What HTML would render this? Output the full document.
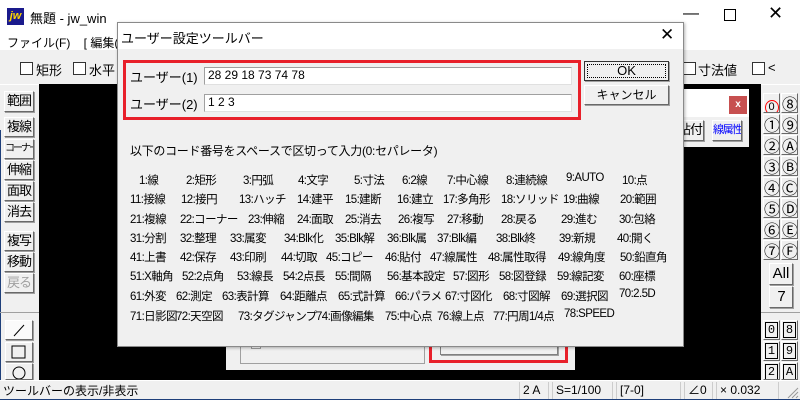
<!DOCTYPE html>
<html><head><meta charset="utf-8"><style>
*{margin:0;padding:0;box-sizing:border-box}
body{width:800px;height:400px;overflow:hidden;position:relative;background:#f0f0f0;font-family:"Liberation Sans","Noto Sans CJK JP",sans-serif;font-size:12px;color:#000}
.a{position:absolute;white-space:nowrap}
.btn{position:absolute;background:#f0f0f0;border:1px solid;border-color:#fff #696969 #696969 #fff;box-shadow:1px 1px 0 #a0a0a0;text-align:center;font-size:13px;line-height:18px;white-space:nowrap;overflow:hidden;letter-spacing:-1px}
.cb{position:absolute;width:13px;height:13px;border:1px solid #333;background:#fff}
.rb{position:absolute;width:17px;height:20px;background:#f0f0f0;border:1px solid;border-color:#fff #696969 #696969 #fff;text-align:center;font-size:16px;line-height:18px;font-family:"Noto Sans CJK JP",sans-serif;overflow:hidden}
.inp{position:absolute;background:#fff;border:1px solid;border-color:#a0a0a0 #e0e0e0 #e0e0e0 #a0a0a0;font-size:12px;line-height:15px;padding-left:3px}
.g span{position:absolute;white-space:nowrap;font-size:11.5px;letter-spacing:-0.6px}
</style></head><body>
<div class="a" style="left:0;top:0;width:800px;height:50px;background:#fff"></div>
<div class="a" style="left:7px;top:8px;width:17px;height:17px;background:#1a1a8c;color:#ffd800;font-size:11px;font-weight:bold;font-style:italic;line-height:17px;text-align:center">jw</div>
<div class="a" style="left:30px;top:8px;font-size:13px">無題 - jw_win</div>
<div class="a" style="left:683px;top:5px;font-size:16px">—</div>
<div class="a" style="left:724px;top:9px;width:12px;height:12px;border:1px solid #000"></div>
<div class="a" style="left:768px;top:3px;font-size:18px">✕</div>
<div class="a" style="left:7px;top:34px;font-size:12px">ファイル(F)&nbsp;&nbsp;&nbsp;&nbsp;[ 編集(E)</div>
<div class="cb" style="left:20px;top:62px"></div><div class="a" style="left:36px;top:60px;font-size:13px">矩形</div>
<div class="cb" style="left:73px;top:62px"></div><div class="a" style="left:89px;top:60px;font-size:13px">水平・</div>
<div class="cb" style="left:683px;top:62px"></div><div class="a" style="left:698px;top:60px;font-size:13px">寸法値</div>
<div class="cb" style="left:752px;top:62px"></div><div class="a" style="left:768px;top:60px;font-size:13px">&lt;</div>
<div class="a" style="left:0;top:84px;width:800px;height:1px;background:#fff"></div>
<div class="a" style="left:39px;top:84px;width:722px;height:296px;background:#000"></div>
<div class="a" style="left:0;top:130px;width:1px;height:250px;background:#1e3f7a"></div>
<div class="btn" style="left:4px;top:91px;width:30px;height:21px">範囲</div>
<div class="btn" style="left:4px;top:117px;width:30px;height:20px">複線</div>
<div class="btn" style="left:4px;top:139px;width:30px;height:20px;font-size:10px;letter-spacing:-2px">コーナー</div>
<div class="btn" style="left:4px;top:160px;width:30px;height:20px">伸縮</div>
<div class="btn" style="left:4px;top:181px;width:30px;height:20px">面取</div>
<div class="btn" style="left:4px;top:202px;width:30px;height:20px">消去</div>
<div class="btn" style="left:4px;top:231px;width:30px;height:20px">複写</div>
<div class="btn" style="left:4px;top:252px;width:30px;height:20px">移動</div>
<div class="btn" style="left:4px;top:273px;width:30px;height:20px;color:#a0a0a0">戻る</div>
<div class="a" style="left:0;top:312px;width:39px;height:1px;background:#a0a0a0"></div>
<div class="btn" style="left:5px;top:320px;width:28px;height:20px;background:#fafafa"><svg width="26" height="18"><line x1="8" y1="15" x2="18" y2="4" stroke="#000"/></svg></div>
<div class="btn" style="left:5px;top:342px;width:28px;height:20px"><svg width="26" height="18"><rect x="6" y="3" width="13" height="12" fill="none" stroke="#000"/></svg></div>
<div class="btn" style="left:5px;top:363px;width:28px;height:17px"><svg width="26" height="16"><circle cx="13" cy="9" r="6" fill="none" stroke="#000"/></svg></div>
<div class="rb" style="left:763px;top:93px"><span style="display:inline-block;width:14px;height:15px;border:1px solid red;border-radius:50%;font-size:11px;line-height:13px;margin-top:2px;font-family:'Liberation Sans'">0</span></div>
<div class="rb" style="left:781px;top:93px">⑧</div>
<div class="rb" style="left:763px;top:114px">①</div><div class="rb" style="left:781px;top:114px">⑨</div>
<div class="rb" style="left:763px;top:135px">②</div><div class="rb" style="left:781px;top:135px">Ⓐ</div>
<div class="rb" style="left:763px;top:156px">③</div><div class="rb" style="left:781px;top:156px">Ⓑ</div>
<div class="rb" style="left:763px;top:177px">④</div><div class="rb" style="left:781px;top:177px">Ⓒ</div>
<div class="rb" style="left:763px;top:198px">⑤</div><div class="rb" style="left:781px;top:198px">Ⓓ</div>
<div class="rb" style="left:763px;top:219px">⑥</div><div class="rb" style="left:781px;top:219px">Ⓔ</div>
<div class="rb" style="left:763px;top:240px">⑦</div><div class="rb" style="left:781px;top:240px">Ⓕ</div>
<div class="btn" style="left:769px;top:263px;width:24px;height:22px;font-size:15px;line-height:20px;letter-spacing:0">All</div>
<div class="btn" style="left:769px;top:286px;width:24px;height:22px;font-size:15px;line-height:20px">7</div>
<div class="a" style="left:761px;top:312px;width:39px;height:1px;background:#a0a0a0"></div>
<div class="rb" style="left:763px;top:320px;font-size:12px;font-family:'Liberation Mono',monospace"><span style="border:1px solid #000;padding:0 2px">0</span></div>
<div class="rb" style="left:781px;top:320px;font-size:12px;font-family:'Liberation Mono',monospace"><span style="border:1px solid #000;padding:0 2px">8</span></div>
<div class="rb" style="left:763px;top:341px;font-size:12px;font-family:'Liberation Mono',monospace"><span style="border:1px solid #000;padding:0 2px">1</span></div>
<div class="rb" style="left:781px;top:341px;font-size:12px;font-family:'Liberation Mono',monospace"><span style="border:1px solid #000;padding:0 2px">9</span></div>
<div class="rb" style="left:763px;top:362px;height:18px;font-size:12px;font-family:'Liberation Mono',monospace"><span style="border:1px solid #000;padding:0 2px">2</span></div>
<div class="rb" style="left:781px;top:362px;height:18px;font-size:12px;font-family:'Liberation Mono',monospace"><span style="border:1px solid #000;padding:0 2px">A</span></div>
<div class="a" style="left:683px;top:89px;width:66px;height:58px;background:#f0f0f0"></div>
<div class="a" style="left:683px;top:89px;width:66px;height:28px;background:#fff"></div>
<div class="a" style="left:729px;top:96px;width:18px;height:18px;background:#c75050;color:#fff;font-size:10px;font-weight:bold;text-align:center;line-height:18px">x</div>
<div class="btn" style="left:676px;top:120px;width:28px;height:21px">貼付</div>
<div class="btn" style="left:712px;top:120px;width:30px;height:21px;color:#0000ff;font-size:11px;letter-spacing:-1.5px">線属性</div>
<div class="a" style="left:226px;top:340px;width:349px;height:30px;background:#f0f0f0"></div>
<div class="a" style="left:240px;top:340px;width:185px;height:24px;border:1px solid #a0a0a0;border-top:none"></div>
<div class="a" style="left:251px;top:343px;width:10px;height:6px;background:#fff;border:1px solid #a0a0a0;border-top:none"></div>
<div class="a" style="left:429px;top:340px;width:139px;height:23px;border:3px solid #e8202a;border-top:none"></div>
<div class="a" style="left:440px;top:340px;width:118px;height:15px;border:1px solid #808080;border-top:none;box-shadow:1px 1px 0 #a0a0a0"></div>
<div class="a" style="left:117px;top:22px;width:567px;height:325px;background:#f0f0f0;border:1px solid #8a8a8a;box-shadow:1px 1px 3px rgba(0,0,0,.3)"></div>
<div class="a" style="left:118px;top:23px;width:565px;height:26px;background:#fff"></div>
<div class="a" style="left:121px;top:28px;font-size:13px">ユーザー設定ツールバー</div>
<div class="a" style="left:660px;top:25px;font-size:17px">✕</div>
<div class="a" style="left:123px;top:60px;width:458px;height:60px;border:3px solid #e8202a"></div>
<div class="a" style="left:130px;top:67px;font-size:13px">ユーザー(1)</div>
<div class="inp" style="left:204px;top:67px;width:368px;height:18px">28 29 18 73 74 78</div>
<div class="a" style="left:130px;top:94px;font-size:13px">ユーザー(2)</div>
<div class="inp" style="left:204px;top:94px;width:368px;height:18px">1 2 3</div>
<div class="btn" style="left:584px;top:61px;width:85px;height:20px;border:1px solid #333;outline:1px dotted #000;outline-offset:-4px;font-size:13px;letter-spacing:0">OK</div>
<div class="btn" style="left:584px;top:85px;width:85px;height:20px;font-size:12px;letter-spacing:0">キャンセル</div>
<div class="a" style="left:130px;top:142px;font-size:12px;letter-spacing:-0.3px">以下のコード番号をスペースで区切って入力(0:セパレータ)</div>
<div class="g">
<div class="a" style="top:172px;left:0">
<span style="left:139px">1:線</span><span style="left:186px">2:矩形</span><span style="left:243px">3:円弧</span><span style="left:298px">4:文字</span><span style="left:354px">5:寸法</span><span style="left:402px">6:2線</span><span style="left:447px">7:中心線</span><span style="left:506px">8:連続線</span><span style="left:566px">9:AUTO</span><span style="left:622px">10:点</span></div>
<div class="a" style="top:191px;left:0">
<span style="left:130px">11:接線</span><span style="left:181px">12:接円</span><span style="left:239px">13:ハッチ</span><span style="left:297px">14:建平</span><span style="left:345px">15:建断</span><span style="left:397px">16:建立</span><span style="left:443px">17:多角形</span><span style="left:501px">18:ソリッド</span><span style="left:563px">19:曲線</span><span style="left:620px">20:範囲</span></div>
<div class="a" style="top:211px;left:0">
<span style="left:130px">21:複線</span><span style="left:180px">22:コーナー</span><span style="left:248px">23:伸縮</span><span style="left:297px">24:面取</span><span style="left:345px">25:消去</span><span style="left:398px">26:複写</span><span style="left:447px">27:移動</span><span style="left:501px">28:戻る</span><span style="left:561px">29:進む</span><span style="left:619px">30:包絡</span></div>
<div class="a" style="top:230px;left:0">
<span style="left:130px">31:分割</span><span style="left:180px">32:整理</span><span style="left:230px">33:属変</span><span style="left:284px">34:Blk化</span><span style="left:335px">35:Blk解</span><span style="left:387px">36:Blk属</span><span style="left:437px">37:Blk編</span><span style="left:496px">38:Blk終</span><span style="left:559px">39:新規</span><span style="left:617px">40:開く</span></div>
<div class="a" style="top:249px;left:0">
<span style="left:130px">41:上書</span><span style="left:180px">42:保存</span><span style="left:230px">43:印刷</span><span style="left:281px">44:切取</span><span style="left:326px">45:コピー</span><span style="left:385px">46:貼付</span><span style="left:430px">47:線属性</span><span style="left:488px">48:属性取得</span><span style="left:558px">49:線角度</span><span style="left:620px">50:鉛直角</span></div>
<div class="a" style="top:268px;left:0">
<span style="left:130px">51:X軸角</span><span style="left:182px">52:2点角</span><span style="left:237px">53:線長</span><span style="left:283px">54:2点長</span><span style="left:335px">55:間隔</span><span style="left:387px">56:基本設定</span><span style="left:453px">57:図形</span><span style="left:499px">58:図登録</span><span style="left:557px">59:線記変</span><span style="left:619px">60:座標</span></div>
<div class="a" style="top:288px;left:0">
<span style="left:130px">61:外変</span><span style="left:176px">62:測定</span><span style="left:222px">63:表計算</span><span style="left:280px">64:距離点</span><span style="left:338px">65:式計算</span><span style="left:395px">66:パラメ</span><span style="left:445px">67:寸図化</span><span style="left:503px">68:寸図解</span><span style="left:561px">69:選択図</span><span style="left:619px">70:2.5D</span></div>
<div class="a" style="top:308px;left:0">
<span style="left:130px">71:日影図</span><span style="left:176px">72:天空図</span><span style="left:238px">73:タグジャンプ</span><span style="left:316px">74:画像編集</span><span style="left:385px">75:中心点</span><span style="left:437px">76:線上点</span><span style="left:493px">77:円周1/4点</span><span style="left:564px">78:SPEED</span></div>
</div>
<div class="a" style="left:0;top:380px;width:800px;height:20px;background:#f0f0f0;border-top:1px solid #fff"></div>
<div class="a" style="left:3px;top:382px;font-size:12px">ツールバーの表示/非表示</div>
<div class="a" style="left:519px;top:382px;width:30px;height:17px;border-left:1px solid #ccc;border-right:1px solid #ccc;padding-left:3px;line-height:16px">2 A</div>
<div class="a" style="left:552px;top:382px;width:61px;height:17px;border-left:1px solid #ccc;border-right:1px solid #ccc;padding-left:3px;line-height:16px">S=1/100</div>
<div class="a" style="left:616px;top:382px;width:65px;height:17px;border-left:1px solid #ccc;border-right:1px solid #ccc;padding-left:3px;line-height:16px">[7-0]</div>
<div class="a" style="left:684px;top:382px;width:29px;height:17px;border-left:1px solid #ccc;border-right:1px solid #ccc;padding-left:3px;line-height:16px">∠0</div>
<div class="a" style="left:716px;top:382px;width:63px;height:17px;border-left:1px solid #ccc;border-right:1px solid #ccc;padding-left:3px;line-height:16px">× 0.032</div>
<svg class="a" style="left:786px;top:386px" width="13" height="13"><path d="M12 2L2 12M12 6L6 12M12 10L10 12" stroke="#999"/></svg>
<div class="a" style="left:0;top:399px;width:800px;height:1px;background:#1e3f7a"></div>
</body></html>
